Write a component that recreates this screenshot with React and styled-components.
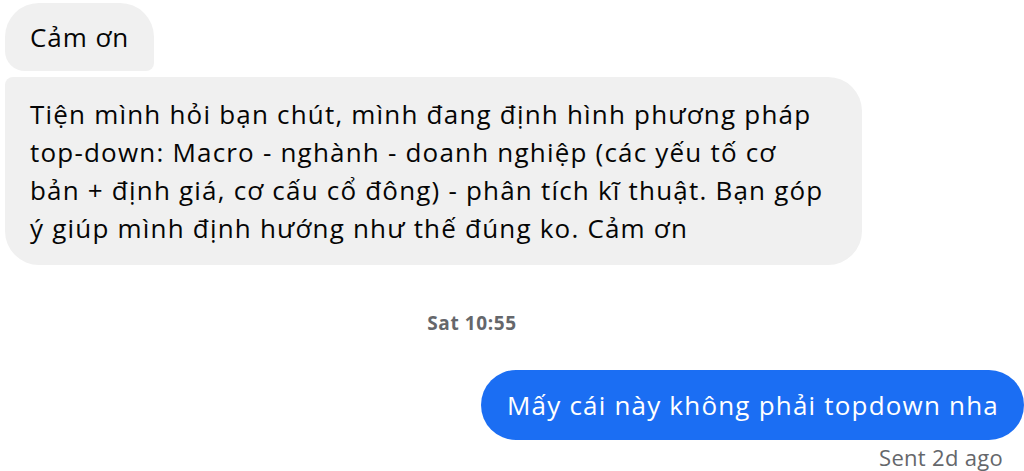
import React from 'react';
import styled, { createGlobalStyle } from 'styled-components';

const GlobalStyle = createGlobalStyle`
  html, body {
    margin: 0;
    padding: 0;
    background: #fff;
  }
  body {
    font-family: "Open Sans", "Noto Sans", sans-serif;
  }
`;

const Thread = styled.div`
  width: 1024px;
  height: 471px;
  overflow: hidden;
  display: flex;
  flex-direction: column;
  padding-top: 3px;
  box-sizing: border-box;
`;

const Incoming = styled.div`
  align-self: flex-start;
  margin-left: 5px;
  margin-bottom: 6px;
  background: #f0f0f0;
  color: #050505;
  font-size: 26px;
  line-height: 38px;
  padding: ${p => p.$pad || '15px 25px'};
  border-radius: ${p => p.$radius};
  letter-spacing: ${p => p.$track || '0.95px'};
`;

const Stamp = styled.div`
  display: flex;
  justify-content: center;
  padding-right: 80px;
  margin-top: 40px;
  font-size: 19px;
  font-weight: 700;
  color: #65676b;
  line-height: 24px;
  letter-spacing: 0.6px;
`;

const Outgoing = styled.div`
  align-self: flex-end;
  margin-top: 35px;
  background: #1b6ef3;
  color: #fff;
  font-size: 26px;
  line-height: 38px;
  padding: 16px 25px 16px 26px;
  border-radius: 35px;
  letter-spacing: 1.2px;
`;

const Receipt = styled.div`
  align-self: flex-end;
  margin-right: 21px;
  margin-top: 3px;
  font-size: 22px;
  color: #65676b;
  line-height: 28px;
  letter-spacing: 0.3px;
`;

export default function App() {
  return (
    <Thread>
      <GlobalStyle />
      <Incoming $radius="34px 34px 8px 20px">Cảm ơn</Incoming>
      <Incoming $pad="18px 39px 18px 25px" $track="1.2px" $radius="8px 34px 34px 34px">
        Tiện mình hỏi bạn chút, mình đang định hình phương pháp<br />
        top-down: Macro - nghành - doanh nghiệp (các yếu tố cơ<br />
        bản + định giá, cơ cấu cổ đông) - phân tích kĩ thuật. Bạn góp<br />
        ý giúp mình định hướng như thế đúng ko. Cảm ơn
      </Incoming>
      <Stamp>Sat 10:55</Stamp>
      <Outgoing>Mấy cái này không phải topdown nha</Outgoing>
      <Receipt>Sent 2d ago</Receipt>
    </Thread>
  );
}
